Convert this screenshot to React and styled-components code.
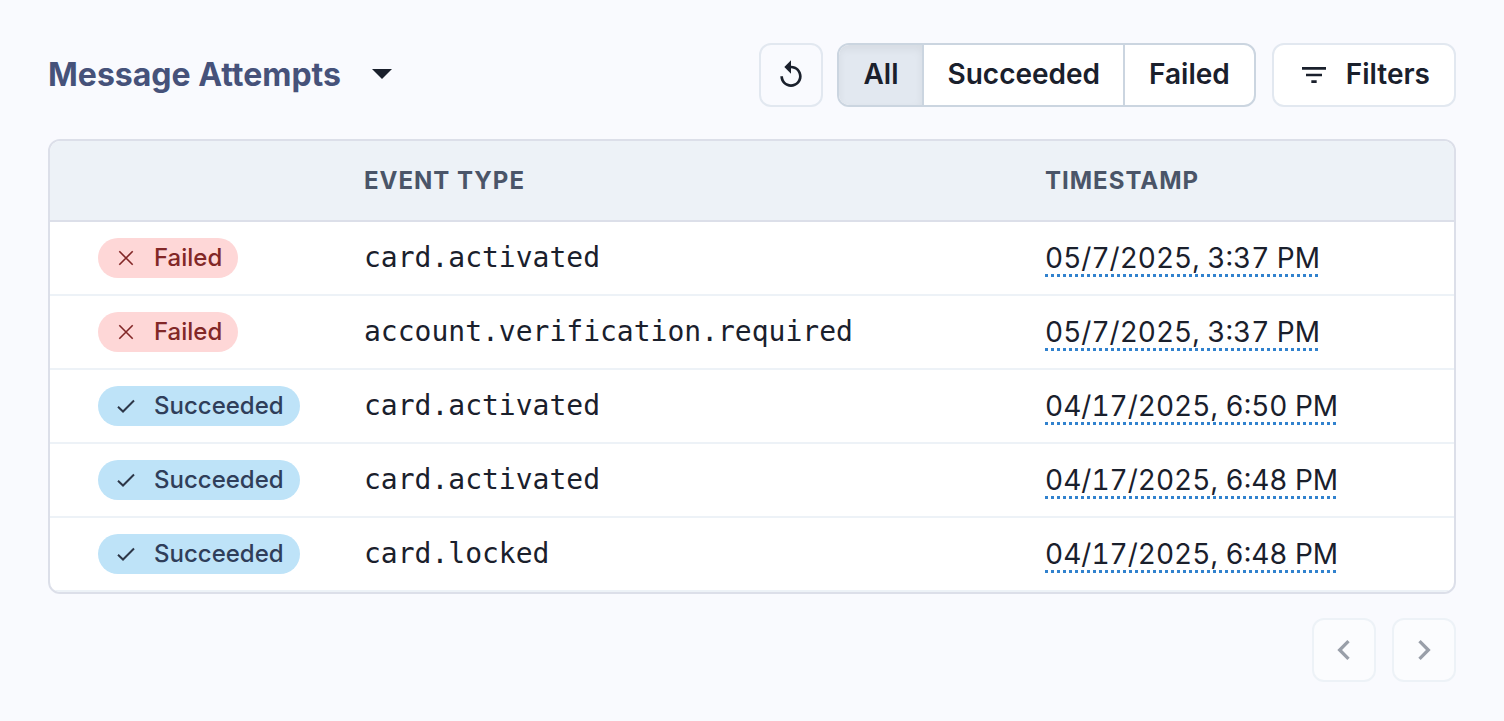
import React, { useState } from "react";
import styled, { createGlobalStyle } from "styled-components";
import {
  MdArrowDropDown,
  MdChevronLeft,
  MdChevronRight,
  MdFilterList,
  MdReplay,
} from "react-icons/md";

const GlobalStyle = createGlobalStyle`
  *, *::before, *::after { box-sizing: border-box; }
  body {
    margin: 0;
    min-height: 100vh;
    background: #f9fafe;
    color: #1a202c;
    font-family: Inter, "Liberation Sans", sans-serif;
    font-size: 28px;
    line-height: 40px;
  }
  button, select { font: inherit; color: inherit; }
`;

const Page = styled.main`
  padding: 43px 48px 39px;
`;

const Toolbar = styled.header`
  display: flex;
  align-items: center;
  justify-content: space-between;
  margin-bottom: 32px;
`;

const ViewPicker = styled.label`
  display: flex;
  align-items: center;
  gap: 16px;
  padding-bottom: 4px;
`;

const ViewSelect = styled.select`
  appearance: none;
  border: 0;
  padding: 4px 0 0;
  background: none;
  color: #46527a;
  font-size: 32px;
  font-weight: 700;
  line-height: 40px;
`;

const Actions = styled.div`
  display: flex;
  align-items: center;
`;

const Button = styled.button`
  display: inline-flex;
  align-items: center;
  justify-content: center;
  gap: 16px;
  height: 64px;
  min-width: 64px;
  padding: ${(p) => (p.$square ? "0" : "0 24px")};
  border: 2px solid #e2e8f0;
  border-radius: 12px;
  background: ${(p) => (p.$ghost ? "transparent" : "#ffffff")};
  color: #1a202c;
  font-weight: 600;

  &:disabled {
    border-color: #edf2f7;
    background: #fbfcfe;
    color: #999fa9;
  }
`;

const ButtonLabel = styled.span`
  padding-bottom: 2px;
`;

const Segments = styled.div`
  display: flex;
  height: 64px;
  margin: 0 16px 0 14px;
  border: 2px solid #cbd5e0;
  border-radius: 12px;
  background: #ffffff;
  overflow: hidden;
`;

const Segment = styled.button`
  padding: 0 23px 2px 24px;
  border: 0;
  background: ${(p) => (p.$active ? "#e2e8f0" : "transparent")};
  box-shadow: ${(p) => (p.$active ? "inset 0 4px 8px rgba(0, 0, 0, 0.06)" : "none")};
  font-weight: 600;

  & + & {
    border-left: 2px solid #cbd5e0;
  }

  &:last-child {
    padding-right: 24px;
  }
`;

const TableCard = styled.div`
  border: 2px solid #dcdfe9;
  border-radius: 12px;
  background: #ffffff;
  overflow: hidden;
`;

const Table = styled.table`
  width: 100%;
  border-collapse: separate;
  border-spacing: 0;
  table-layout: fixed;
`;

const HeadCell = styled.th`
  width: ${(p) => p.$width || "auto"};
  height: 81px;
  padding: 0 24px;
  border-bottom: 2px solid #dcdfe9;
  background: #edf2f7;
  color: #4a5568;
  font-size: 24px;
  font-weight: 700;
  letter-spacing: 1px;
  text-align: left;
  text-transform: uppercase;
`;

const Cell = styled.td`
  height: 74px;
  padding: 0 24px;
  border-bottom: 2px solid #edf2f7;

  &:first-child {
    padding-left: 48px;
  }
`;

const EventName = styled.code`
  display: block;
  font-family: "DejaVu Sans Mono", monospace;
  font-size: 28px;
`;

const Badge = styled.span`
  display: flex;
  align-items: center;
  gap: 16px;
  width: max-content;
  height: 40px;
  padding: 0 16px;
  border-radius: 20px;
  background: ${(p) => (p.$failed ? "#fed7d7" : "#bee3f8")};
  color: ${(p) => (p.$failed ? "#822727" : "#2f3e5a")};
  font-size: 24px;
  font-weight: 500;
`;

const Timestamp = styled.time`
  display: block;
  width: max-content;
  line-height: 38px;
  font-variant-numeric: tabular-nums;
  background: repeating-linear-gradient(to right, #3182ce 0 3px, transparent 3px 6px) left bottom / 100% 3px no-repeat;
`;

const Pagination = styled.nav`
  display: flex;
  justify-content: flex-end;
  gap: 16px;
  margin-top: 24px;
`;

function CrossIcon() {
  return (
    <svg width="24" height="24" viewBox="0 0 24 24" fill="none" stroke="currentColor" strokeWidth="1.6" aria-hidden="true">
      <path d="M5.3 5.3l13.4 13.4M18.7 5.3L5.3 18.7" />
    </svg>
  );
}

function CheckIcon() {
  return (
    <svg width="24" height="24" viewBox="0 0 24 24" fill="none" stroke="#2d3748" strokeWidth="2" aria-hidden="true">
      <path d="M4 12.8l5 4.7L20 6.5" />
    </svg>
  );
}

const attempts = [
  { failed: true, event: "card.activated", time: "05/7/2025, 3:37 PM" },
  { failed: true, event: "account.verification.required", time: "05/7/2025, 3:37 PM" },
  { failed: false, event: "card.activated", time: "04/17/2025, 6:50 PM" },
  { failed: false, event: "card.activated", time: "04/17/2025, 6:48 PM" },
  { failed: false, event: "card.locked", time: "04/17/2025, 6:48 PM" },
];

const filters = ["All", "Succeeded", "Failed"];

export default function App() {
  const [filter, setFilter] = useState("All");
  const rows = attempts.filter(
    (a) => filter === "All" || (filter === "Failed") === a.failed
  );

  return (
    <>
      <GlobalStyle />
      <Page>
        <Toolbar>
          <ViewPicker>
            <ViewSelect aria-label="View">
              <option>Message Attempts</option>
            </ViewSelect>
            <MdArrowDropDown size={48} aria-hidden="true" />
          </ViewPicker>
          <Actions>
            <Button type="button" $square $ghost aria-label="Refresh">
              <MdReplay size={32} />
            </Button>
            <Segments role="group" aria-label="Status">
              {filters.map((name) => (
                <Segment
                  key={name}
                  type="button"
                  $active={name === filter}
                  aria-pressed={name === filter}
                  onClick={() => setFilter(name)}
                >
                  {name}
                </Segment>
              ))}
            </Segments>
            <Button type="button">
              <MdFilterList size={32} aria-hidden="true" />
              <ButtonLabel>Filters</ButtonLabel>
            </Button>
          </Actions>
        </Toolbar>

        <TableCard>
          <Table>
            <thead>
              <tr>
                <HeadCell $width="290px" aria-label="Status" />
                <HeadCell>Event type</HeadCell>
                <HeadCell $width="433px">Timestamp</HeadCell>
              </tr>
            </thead>
            <tbody>
              {rows.map((a, i) => (
                <tr key={i}>
                  <Cell>
                    <Badge $failed={a.failed}>
                      {a.failed ? <CrossIcon /> : <CheckIcon />}
                      {a.failed ? "Failed" : "Succeeded"}
                    </Badge>
                  </Cell>
                  <Cell>
                    <EventName>{a.event}</EventName>
                  </Cell>
                  <Cell>
                    <Timestamp>{a.time}</Timestamp>
                  </Cell>
                </tr>
              ))}
            </tbody>
          </Table>
        </TableCard>

        <Pagination aria-label="Pages">
          <Button type="button" $square disabled aria-label="Previous page">
            <MdChevronLeft size={40} />
          </Button>
          <Button type="button" $square disabled aria-label="Next page">
            <MdChevronRight size={40} />
          </Button>
        </Pagination>
      </Page>
    </>
  );
}
